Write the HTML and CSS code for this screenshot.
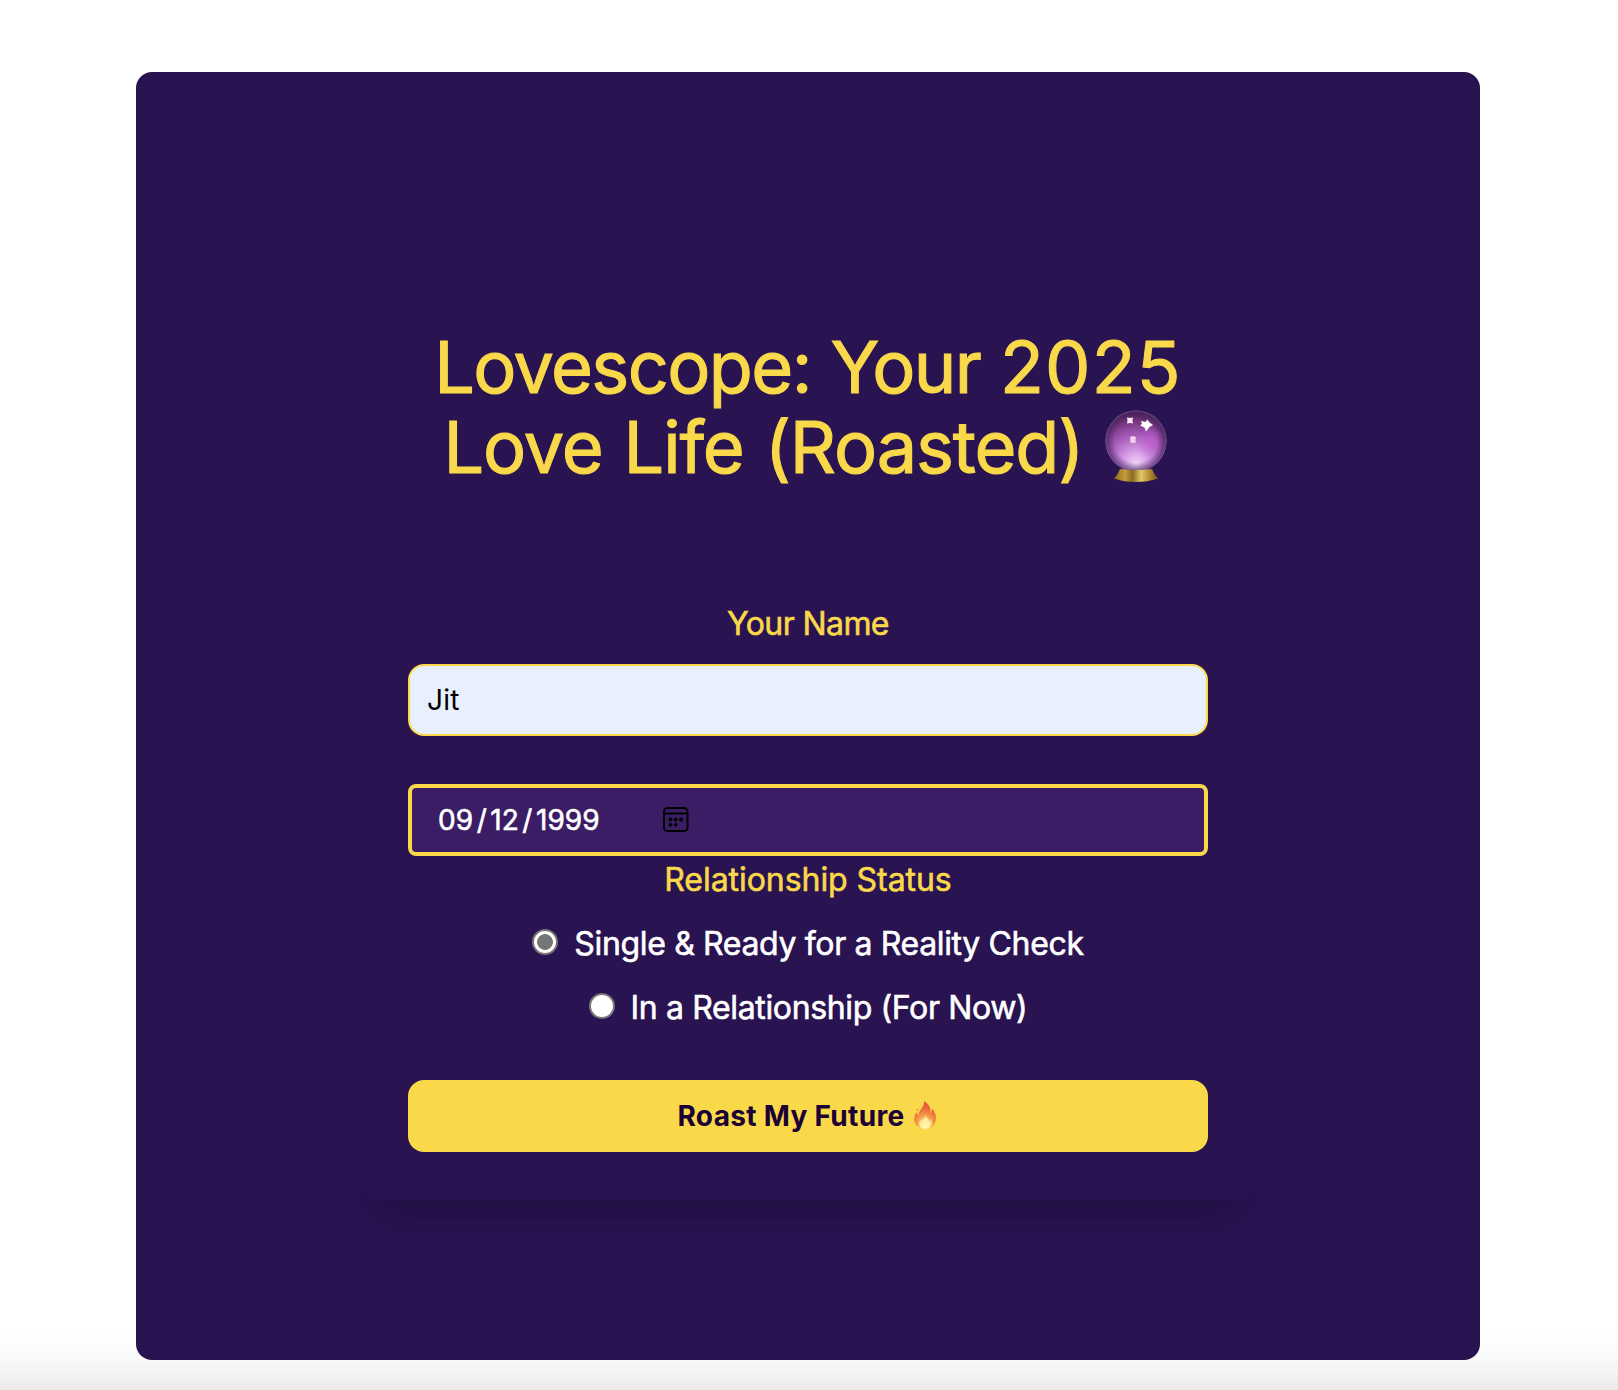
FILE: index.html
```
<!DOCTYPE html>
<html lang="en">
  <head>
    <meta charset="UTF-8">
    <title>Lovescope</title>
    <link rel="stylesheet" href="styles.css">
  </head>
  <body>
    <main class="panel">
      <h1>
        <span class="line-one">Lovescope: Your <span class="number">2025</span></span><br>
        <span class="line-two">Love Life (Roasted)</span><svg class="ball" viewBox="0 0 62 72">
          <defs>
            <radialGradient id="glass" cx="50%" cy="88%" r="88%">
              <stop offset="0" stop-color="#f3d9fa"></stop>
              <stop offset="0.25" stop-color="#d49ae3"></stop>
              <stop offset="0.55" stop-color="#a45ab8"></stop>
              <stop offset="0.8" stop-color="#753680"></stop>
              <stop offset="1" stop-color="#481d4c"></stop>
            </radialGradient>
            <radialGradient id="rim" cx="50%" cy="50%" r="50%">
              <stop offset="0.7" stop-color="#40205c" stop-opacity="0"></stop>
              <stop offset="0.94" stop-color="#40205c" stop-opacity="0.55"></stop>
              <stop offset="1" stop-color="#6c5a90"></stop>
            </radialGradient>
            <radialGradient id="glow" cx="50%" cy="50%" r="50%">
              <stop offset="0" stop-color="#c65fd6" stop-opacity="0.7"></stop>
              <stop offset="1" stop-color="#c65fd6" stop-opacity="0"></stop>
            </radialGradient>
            <linearGradient id="gold">
              <stop offset="0" stop-color="#8a6420"></stop>
              <stop offset="0.25" stop-color="#c69c3d"></stop>
              <stop offset="0.42" stop-color="#8c6b24"></stop>
              <stop offset="0.62" stop-color="#e0c866"></stop>
              <stop offset="0.85" stop-color="#a87f2a"></stop>
              <stop offset="1" stop-color="#7a5519"></stop>
            </linearGradient>
          </defs>
          <circle cx="31" cy="31" r="30.5" fill="url(#glass)"></circle>
          <ellipse cx="46" cy="32" rx="13" ry="17" fill="url(#glow)"></ellipse>
          <circle cx="31" cy="31" r="30.5" fill="url(#rim)"></circle>
          <path d="M15 59Q31 61 47 59Q49 65 53 68.500Q43 72 31 72Q19 72 9 68.500Q13 65 15 59Z" fill="url(#gold)"></path>
          <path d="M22 7.500l3 .5 3-.5-.5 3 .5 3-3-.5-3 .5 .5-3z" fill="#ffe6f6"></path>
          <path d="M36 11l4.500 1 2-2.500 1.500 2.500 4 3-3.500 2-3.500 4.500-1.500-4-4.500-2 2-1.500z" fill="#fff"></path>
          <path d="M25 27l3-1 3 1-.5 3 .5 2.500-3 .5-3-.5 .5-2.500z" fill="#f4cdf0"></path>
        </svg>
      </h1>

      <form class="card">
        <label class="field-label name-label" for="name">Your Name</label>
        <input type="text" id="name" value="Jit">

        <div class="date-field">
          <span>09</span><span class="slash">/</span><span>12</span><span class="slash">/</span><span class="year">1999</span>
          <svg class="calendar" viewBox="0 0 26 26">
            <rect x="1" y="1" width="23.500" height="23" rx="3.500" fill="none" stroke="#000" stroke-width="1.900"></rect>
            <path d="M1 6.500h23.500" stroke="#000" stroke-width="1.900"></path>
            <g>
              <circle cx="7.500" cy="12.500" r="1.900"></circle>
              <circle cx="12.700" cy="12.500" r="1.900"></circle>
              <circle cx="18" cy="12.500" r="1.900"></circle>
              <circle cx="7.500" cy="17.800" r="1.900"></circle>
              <circle cx="12.700" cy="17.800" r="1.900"></circle>
            </g>
          </svg>
        </div>

        <div class="field-label status-label">Relationship Status</div>
        <label class="option single">
          <input type="radio" name="status" checked>
          <span>Single &amp; Ready for a Reality Check</span>
        </label>
        <label class="option taken">
          <input type="radio" name="status">
          <span>In a Relationship (For Now)</span>
        </label>

        <button type="button" id="roast-btn">
          <span>Roast My Future</span>
          <svg class="fire" viewBox="0 0 22 28">
            <defs>
              <radialGradient id="flame" cx="50%" cy="88%" r="80%">
                <stop offset="0" stop-color="#fffbd0"></stop>
                <stop offset="0.2" stop-color="#fde684"></stop>
                <stop offset="0.45" stop-color="#f6a04a"></stop>
                <stop offset="0.75" stop-color="#ec6a3c"></stop>
                <stop offset="1" stop-color="#e65a3a"></stop>
              </radialGradient>
            </defs>
            <path d="M10 0C15 3 17 7 16.500 12C17.800 11 18 9 17.800 7.500C21 10.500 22 14 21.800 18C21.500 24 17 28 11 28C5 28 .5 24 .3 18.500C.2 15 1.500 13 3 11C3.200 13 3.700 14 4.500 14.500C5 8 11 6 10 0Z" fill="url(#flame)"></path>
            <path d="M11.500 14C12.500 17 15 18 15.500 20.500C17.500 20 17 18 17 17C19 21 18 27.500 11 27.700C5 27.500 4 22 6.500 19C7 20 7.300 20.500 8 20.500C8.500 18 11.500 17 11.500 14Z" fill="#fff5a8" opacity="0.7"></path>
            <path d="M3.500 7.500Q5 8.500 3.500 10Q2 9 3.500 7.500Z" fill="#ec6a3c"></path>
          </svg>
        </button>
      </form>
    </main>
    <div class="bottom-fade"></div>
  </body>
</html>
```
FILE: styles.css
```
* {
  box-sizing: border-box;
}

body {
  margin: 0;
  padding: 72px 138px 30px 136px;
  background-color: #fff;
  font-family: Inter, "Liberation Sans", sans-serif;
}

.panel {
  display: flex;
  flex-direction: column;
  align-items: center;
  height: 1288px;
  padding-top: 255px;
  border-radius: 16px;
  background-color: #291351;
}

h1 {
  margin: 0 0 65px;
  color: #f9d84a;
  font-size: 72px;
  font-weight: 400;
  line-height: 80px;
  height: 160px;
  text-align: center;
  white-space: nowrap;
  -webkit-text-stroke: 1.1px #f9d84a;
}

.line-one {
  letter-spacing: -1.6px;
  word-spacing: 1px;
}

.number {
  letter-spacing: 1.2px;
}

.line-two {
  letter-spacing: -1.15px;
  word-spacing: 2px;
}

.ball {
  width: 62px;
  height: 72px;
  margin: 0 5px 0 22px;
  vertical-align: -9px;
}

.card {
  display: flex;
  flex-direction: column;
  align-items: center;
  width: 896px;
  height: 648px;
  padding: 48px;
  border-radius: 16px;
  background-color: #291351;
  box-shadow: 0 34px 42px -12px rgba(0, 0, 0, 0.1), 0 14px 20px -10px rgba(0, 0, 0, 0.08);
}

.field-label {
  color: #f9d84a;
  font-size: 32px;
  line-height: 48px;
  -webkit-text-stroke: 0.6px #f9d84a;
}

.name-label {
  margin-bottom: 16px;
  letter-spacing: -0.6px;
}

.status-label {
  letter-spacing: -0.05px;
}

#name {
  width: 100%;
  height: 72px;
  padding: 0 17px;
  border: 2px solid #f9d84a;
  border-radius: 16px;
  background-color: #e8f0fe;
  color: #000;
  font-family: inherit;
  font-size: 28px;
  letter-spacing: 0.3px;
}

.date-field {
  display: flex;
  align-items: center;
  width: 100%;
  height: 72px;
  margin-top: 48px;
  padding-left: 26px;
  border: 4px solid #f9d84a;
  border-radius: 8px;
  background-color: #3a1d65;
  color: #fff;
  font-size: 28px;
  letter-spacing: 0.1px;
  -webkit-text-stroke: 0.6px #fff;
}

.slash {
  width: 17px;
  text-align: center;
}

.year {
  width: 64px;
}

.calendar {
  width: 26px;
  height: 26px;
  margin-left: 63px;
}

.option {
  display: flex;
  align-items: center;
  height: 48px;
  margin-top: 16px;
  color: #fff;
  font-size: 32px;
  line-height: 48px;
  -webkit-text-stroke: 0.6px #fff;
}

.single {
  letter-spacing: -0.35px;
}

.taken {
  letter-spacing: -0.36px;
}

.option input {
  appearance: none;
  width: 26px;
  height: 26px;
  margin: 0 16px 4px 0;
  border: 2px solid #767676;
  border-radius: 50%;
  background-color: #fff;
}

.option input:checked {
  background-image: radial-gradient(circle, #767676 7.5px, #fff 8.2px);
}

#roast-btn {
  display: flex;
  align-items: center;
  justify-content: center;
  width: 100%;
  height: 72px;
  margin-top: 48px;
  padding: 0;
  border: none;
  border-radius: 16px;
  background-color: #f9d84a;
  color: #1a0033;
  font-family: inherit;
  font-size: 28px;
  font-weight: 700;
  letter-spacing: 0.32px;
  cursor: pointer;
}

.fire {
  width: 22px;
  height: 28px;
  margin: 0 2px 2px 10px;
}

.bottom-fade {
  position: fixed;
  left: 0;
  right: 0;
  bottom: 0;
  height: 60px;
  background: linear-gradient(rgba(0, 0, 0, 0), rgba(0, 0, 0, 0.02) 45%, rgba(0, 0, 0, 0.08));
  pointer-events: none;
}
```
